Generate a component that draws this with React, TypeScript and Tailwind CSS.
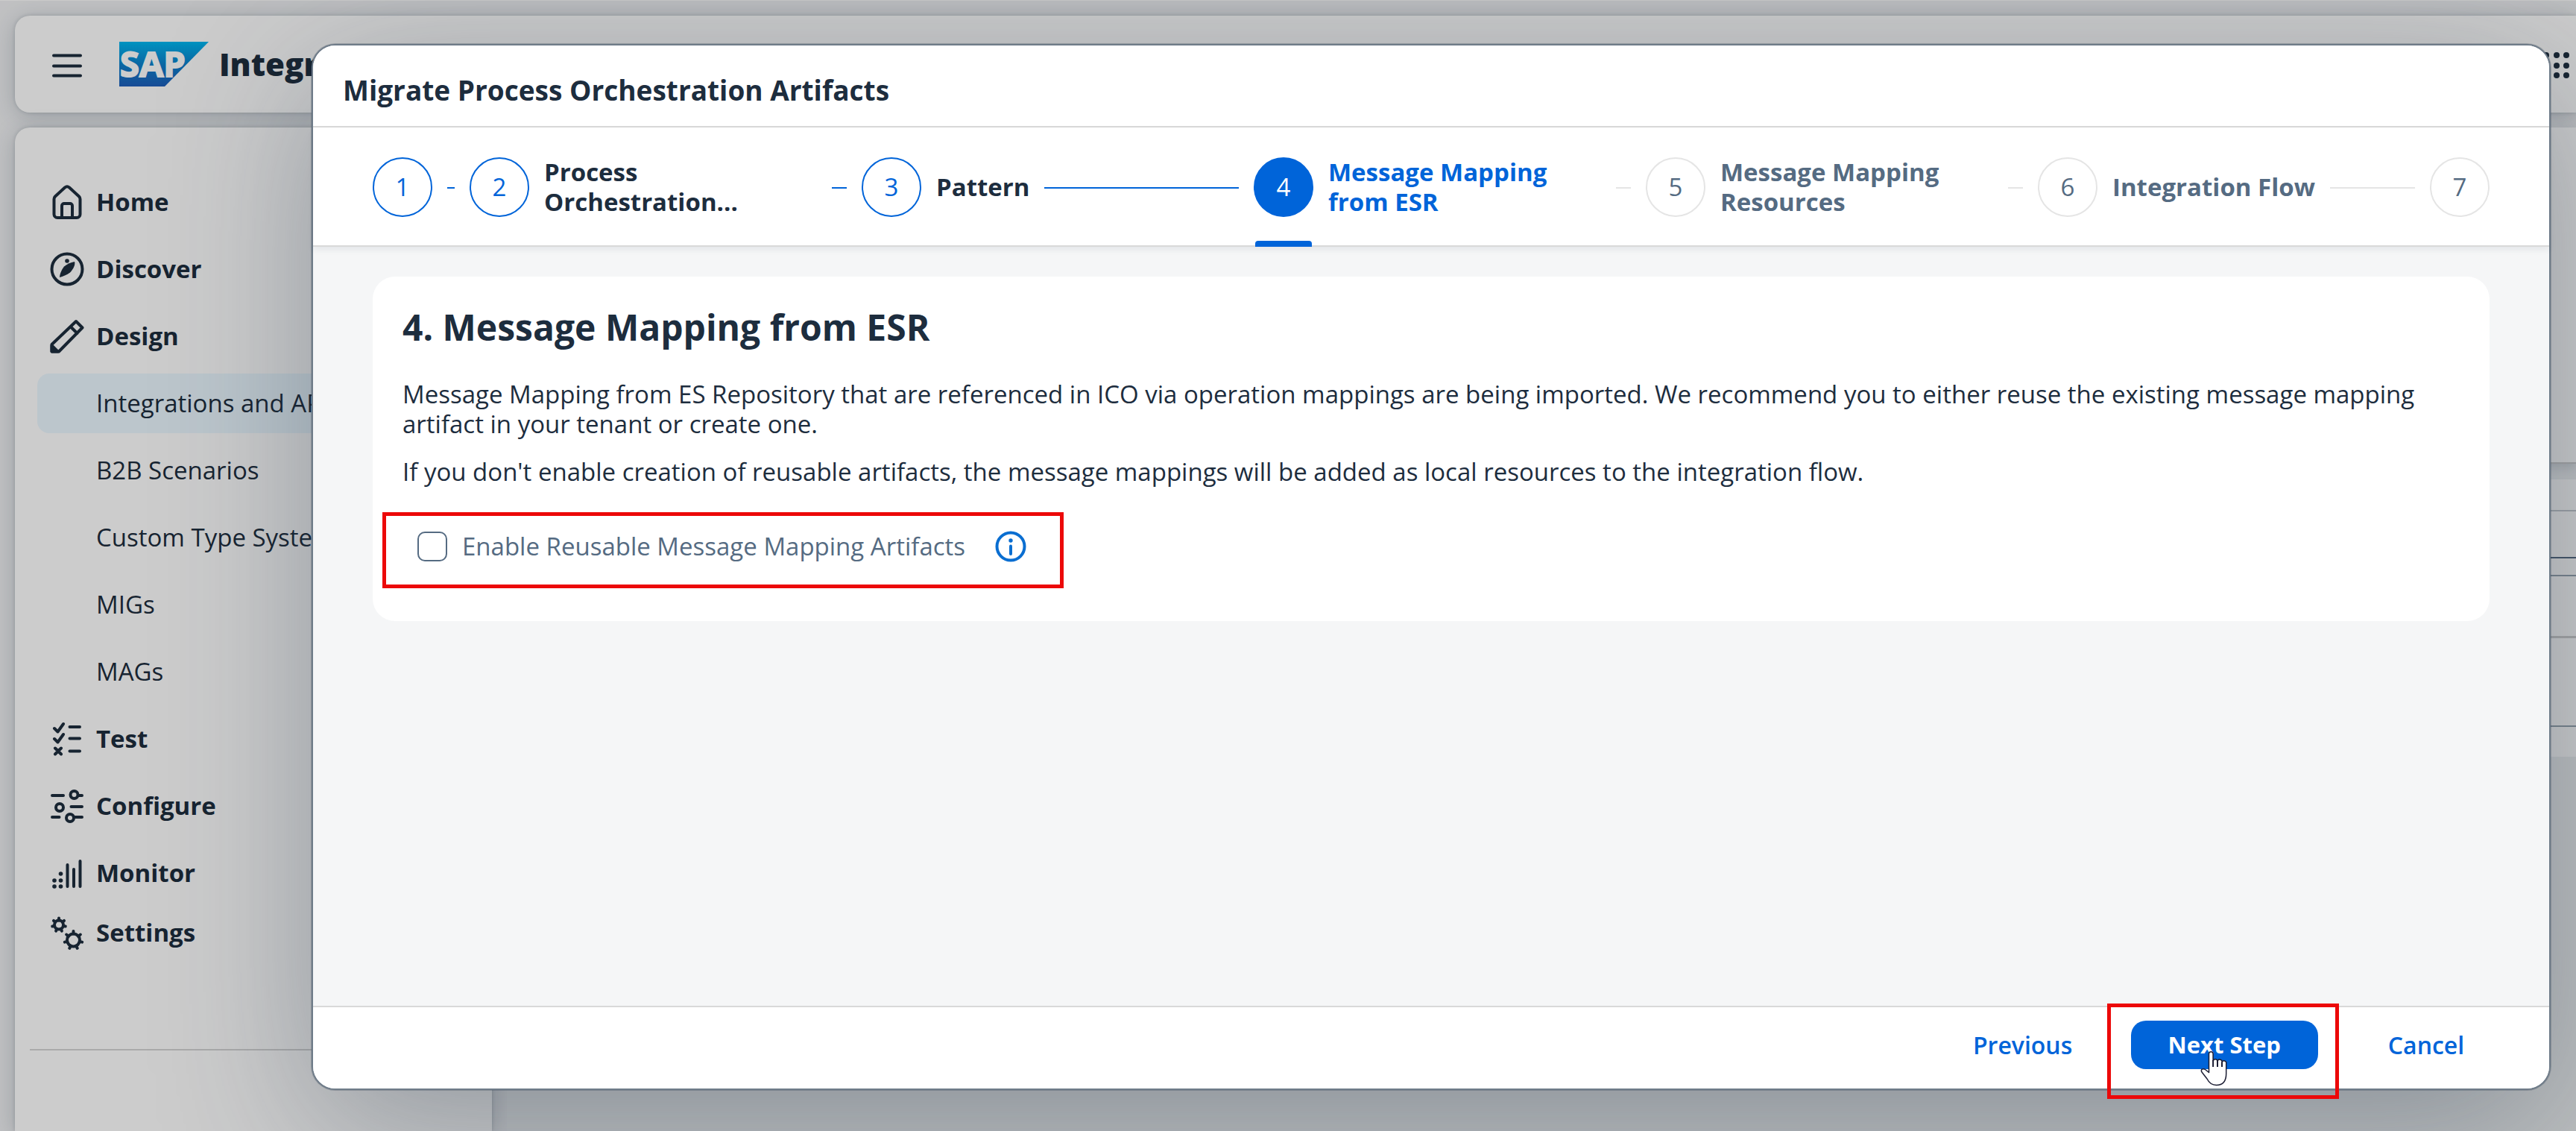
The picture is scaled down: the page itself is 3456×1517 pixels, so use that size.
import React from "react";

const Stroke = ({ children }: { children: React.ReactNode }) => (
  <svg viewBox="0 0 46 46" className="size-[46px] shrink-0" fill="none" stroke="currentColor" strokeWidth="4" strokeLinecap="round" strokeLinejoin="round" aria-hidden="true">
    {children}
  </svg>
);

const HomeIcon = () => (
  <Stroke>
    <path d="M5.5 19v20.5a4.5 4.5 0 0 0 4.500 4.500h26a4.500 4.500 0 0 0 4.500-4.500V19q0-2-1.500-3.500L26 3.500q-3-2.500-6 0L7 15.500Q5.500 17 5.500 19Z" />
    <path d="M16 44V28a3 3 0 0 1 3-3h8a3 3 0 0 1 3 3v16" />
  </Stroke>
);

const CompassIcon = () => (
  <Stroke>
    <circle cx="23" cy="23" r="20.500" />
    <path d="M33 13c1.500 4-2 10.500-6 14.500-4 3-10 5.500-14 6.500 0-4 2.500-10 6-14.500 4-3.500 9-5.500 14-6.500Z" fill="currentColor" stroke="none" />
    <circle cx="23" cy="12" r="2.800" fill="currentColor" stroke="none" />
  </Stroke>
);

const PencilIcon = () => (
  <Stroke>
    <path d="M35 3l8.500 8.500L12 43.500H2.500V34ZM28 10.500l8.500 8.500" />
    <path d="M2.500 35.500l8 8h-8Z" fill="currentColor" />
  </Stroke>
);

const ChecklistIcon = () => (
  <Stroke>
    <path d="M6 9l4.500 4.500L18 3M6 23l4.500 4.500L18 17M7 35.500l8 8M15 35.500l-8 8M26.500 7H40M26.500 22.500H40M26.500 39.500H40" />
  </Stroke>
);

const SlidersIcon = () => (
  <Stroke>
    <path d="M3 9h15M38 9h5M28.500 24H43M3 38h9.500M32.500 38H43" />
    <circle cx="32.500" cy="8" r="5" />
    <circle cx="13" cy="25" r="5" />
    <circle cx="27" cy="39" r="5" />
  </Stroke>
);

const BarsIcon = () => (
  <Stroke>
    <path d="M23.500 12v29M32 18v23M40.500 7v34" />
    <g fill="currentColor" stroke="none">
      <circle cx="6" cy="33" r="2.800" />
      <circle cx="6" cy="41" r="2.800" />
      <circle cx="14.500" cy="24" r="2.800" />
      <circle cx="14.500" cy="33" r="2.800" />
      <circle cx="14.500" cy="41" r="2.800" />
    </g>
  </Stroke>
);

const Gear = ({ cx, cy, r, tooth }: { cx: number; cy: number; r: number; tooth: number }) => (
  <g>
    <circle cx={cx} cy={cy} r={r} />
    {[0, 1, 2, 3, 4, 5, 6].map((i) => {
      const a = (i / 7) * Math.PI * 2;
      return (
        <line key={i} x1={cx + Math.sin(a) * r} y1={cy - Math.cos(a) * r} x2={cx + Math.sin(a) * tooth} y2={cy - Math.cos(a) * tooth} />
      );
    })}
  </g>
);

const GearsIcon = () => (
  <Stroke>
    <Gear cx={12} cy={12.5} r={6} tooth={9} />
    <Gear cx={31.5} cy={33} r={8.5} tooth={12} />
  </Stroke>
);

const SapLogo = () => (
  <svg viewBox="0 0 120 60" className="h-[60px] w-[120px] shrink-0" role="img" aria-label="SAP">
    <defs>
      <linearGradient id="sapBlue" x1="0" y1="0" x2="0" y2="1">
        <stop offset="0" stopColor="#00b8f1" />
        <stop offset="0.500" stopColor="#0d82cd" />
        <stop offset="1" stopColor="#1e5fbb" />
      </linearGradient>
    </defs>
    <path d="M0 0h120L61 60H0Z" fill="url(#sapBlue)" />
    <text x="1" y="47" fill="#fff" stroke="#fff" strokeWidth="2" fontFamily="'Open Sans', sans-serif" fontWeight="700" fontSize="47">
      SAP
    </text>
  </svg>
);

const MenuIcon = () => (
  <svg viewBox="0 0 40 32" className="h-8 w-10" stroke="currentColor" strokeWidth="4" strokeLinecap="round" aria-hidden="true">
    <path d="M2 2.500h36M2 16.500h36M2 29.500h36" />
  </svg>
);

const GridIcon = () => (
  <svg viewBox="0 0 36 36" className="size-9" fill="currentColor" aria-hidden="true">
    {[4, 18, 31].map((y) => [4, 18, 31].map((x) => <circle key={`${x}-${y}`} cx={x} cy={y} r="4" />))}
  </svg>
);

const InfoIcon = () => (
  <svg viewBox="0 0 42 42" className="size-[42px]" fill="none" stroke="currentColor" strokeWidth="4" strokeLinecap="round" aria-hidden="true">
    <circle cx="21" cy="21" r="18.500" />
    <path d="M21 20.500v10.500" />
    <circle cx="21" cy="13" r="2.700" fill="currentColor" stroke="none" />
  </svg>
);

const HandCursor = () => (
  <svg viewBox="0 0 36 48" className="pointer-events-none absolute top-[41px] left-[93px] h-12 w-9" fill="#fff" stroke="#1b1d33" strokeWidth="1.500" strokeLinejoin="round" aria-hidden="true">
    <path d="M11.500 29.500V4.500a2.800 2.800 0 0 1 5.600 0V14a3 3 0 0 1 5.900 .500 3 3 0 0 1 6 1.500 2.800 2.800 0 0 1 5.700 1.500V31c0 10-4.700 15.500-13.200 15.500C14 46.500 11 42 9 38L2 29c-2-3.500 1.500-5.500 4.500-3.500Z" />
    <path d="M17.100 13v9M23 14v8M29 15.500V22" strokeWidth="2" />
  </svg>
);

const navItems = [
  { label: "Home", icon: HomeIcon },
  { label: "Discover", icon: CompassIcon },
  { label: "Design", icon: PencilIcon },
  { label: "Integrations and APIs", selected: true },
  { label: "B2B Scenarios" },
  { label: "Custom Type Systems" },
  { label: "MIGs" },
  { label: "MAGs" },
  { label: "Test", icon: ChecklistIcon },
  { label: "Configure", icon: SlidersIcon },
  { label: "Monitor", icon: BarsIcon },
];

const NavLink = ({ label, icon: Icon, selected }: { label: string; icon?: React.ComponentType; selected?: boolean }) => (
  <a
    href="#"
    aria-current={selected ? "page" : undefined}
    className={`flex h-20 items-center gap-4 rounded-2xl pl-[17px] text-[33px] whitespace-nowrap ${selected ? "bg-[#ebf8ff]" : ""} ${Icon ? "font-bold" : ""}`}
  >
    <span className="w-[46px] shrink-0">{Icon && <Icon />}</span>
    {label}
  </a>
);

const Shell = () => (
  <div className="flex min-h-screen flex-col gap-5 border-t border-white bg-[#f0f1f3] pt-5 pl-5">
    <header className="flex h-[130px] items-center rounded-l-[20px] bg-white pl-[50px] shadow-[0_0_5px_rgba(34,53,72,0.2),0_5px_30px_rgba(34,53,72,0.22)]">
      <button type="button" aria-label="Menu" className="mt-1">
        <MenuIcon />
      </button>
      <div className="ml-[50px]">
        <SapLogo />
      </div>
      <span className="ml-[14px] text-[42px] leading-[54px] font-extrabold whitespace-nowrap">Integration Suite</span>
      <button type="button" aria-label="Products" className="mt-1 mr-2 ml-auto">
        <GridIcon />
      </button>
    </header>
    <div className="flex grow gap-5">
      <aside className="w-[640px] shrink-0 rounded-tl-[20px] bg-white px-5 shadow-[0_0_5px_rgba(34,53,72,0.2),0_5px_30px_rgba(34,53,72,0.22)]">
        <nav className="flex flex-col gap-2.5 px-2.5 pt-[60px]">
          {navItems.map((item) => (
            <NavLink key={item.label} {...item} />
          ))}
        </nav>
        <div className="border-b-2 border-[#d5d5d5] px-2.5 pb-[116px]">
          <NavLink label="Settings" icon={GearsIcon} />
        </div>
      </aside>
      <main className="grow bg-[#eef0f2]">
        <div className="h-[451px] border-b-2 border-[#cccccc] bg-white shadow-[0_5px_12px_rgba(34,53,72,0.15)]" />
        <div className="mt-[21px] bg-white">
          <div className="h-[43px] border-b-2 border-[#c6cbd0]" />
          <div className="h-[63px] border-b-2 border-[#556b82]" />
          <div className="h-6 border-b-2 border-[#98a5b1]" />
          <div className="h-[83px] border-b-3 border-[#d0d0d0]" />
          <div className="h-[119px] border-b-2 border-[#98a5b1]" />
          <div className="h-10" />
        </div>
      </main>
    </div>
  </div>
);

type StepState = "done" | "active" | "todo";
const steps: { n: number; label?: string; state: StepState }[] = [
  { n: 1, state: "done" },
  { n: 2, label: "Process Orchestration...", state: "done" },
  { n: 3, label: "Pattern", state: "done" },
  { n: 4, label: "Message Mapping from ESR", state: "active" },
  { n: 5, label: "Message Mapping Resources", state: "todo" },
  { n: 6, label: "Integration Flow", state: "todo" },
  { n: 7, state: "todo" },
];

const circleStyle: Record<StepState, string> = {
  done: "border-[#0064d9] text-[#0064d9]",
  active: "border-[#0064d9] bg-[#0064d9] text-white",
  todo: "border-[#e5e5e5] text-[#556b82]",
};
const labelStyle: Record<StepState, string> = {
  done: "text-[#1d2d3e]",
  active: "text-[#0064d9]",
  todo: "text-[#556b82]",
};

const Stepper = () => (
  <ol className="relative flex border-b-2 border-[#d9d9d9] bg-white px-20 pt-10 pb-[38px] shadow-[0_4px_8px_rgba(34,53,72,0.08)]">
    {steps.map(({ n, label, state }) => (
      <li key={n} className={`flex items-center ${label ? "min-w-0 flex-1" : ""}`}>
        <button type="button" aria-current={state === "active" ? "step" : undefined} className="flex min-w-0 items-center gap-5 text-left">
          <span className={`relative flex size-20 shrink-0 items-center justify-center rounded-full border-2 text-[33px] leading-10 ${circleStyle[state]}`}>
            {n}
            {state === "active" && <span className="absolute top-[110px] left-0 h-2 w-[76px] rounded-t bg-[#0064d9]" />}
          </span>
          {label && <span className={`text-[33px] leading-10 font-bold ${labelStyle[state]}`}>{label}</span>}
        </button>
        {n < 7 && (
          <span className={`mx-5 mt-0.5 h-0.5 ${label ? "min-w-5 flex-1" : "w-2.5"} ${state === "done" ? "bg-[#0064d9]" : "bg-[#e5e5e5]"}`} />
        )}
      </li>
    ))}
  </ol>
);

const Highlight = ({ className }: { className: string }) => (
  <span aria-hidden="true" className={`pointer-events-none absolute border-5 border-[#ec0808] ${className}`} />
);

const Dialog = () => (
  <section
    role="dialog"
    aria-modal="true"
    aria-labelledby="dialog-title"
    className="flex grow flex-col rounded-[32px] border-2 border-[#6f7c89] bg-[#f5f6f7] shadow-[0_0_0_1px_rgba(34,53,72,0.25),0_50px_200px_rgba(34,53,72,0.34)]"
  >
    <h1 id="dialog-title" className="rounded-t-[30px] border-b-2 border-[#d9d9d9] bg-white px-10 pt-[34px] pb-[22px] text-[37px] leading-[52px] font-bold">
      Migrate Process Orchestration Artifacts
    </h1>
    <Stepper />
    <div className="grow px-20 pt-10">
      <div className="rounded-[30px] bg-white px-10 pt-[38px] pb-[60px]">
        <h2 className="text-[48px] leading-[60px] font-bold">4. Message Mapping from ESR</h2>
        <div className="mt-10 flex flex-col gap-6 text-[33px] leading-10">
          <p>
            Message Mapping from ES Repository that are referenced in ICO via operation mappings are being imported. We recommend you to either reuse the existing message mapping artifact in your tenant or create one.
          </p>
          <p>If you don't enable creation of reusable artifacts, the message mappings will be added as local resources to the integration flow.</p>
        </div>
        <div className="relative mt-10 flex h-20 w-fit items-center pl-5 text-[33px]">
          <input id="reusable" type="checkbox" className="size-10 appearance-none rounded-[10px] border-2 border-[#556b82] bg-white checked:bg-[#0064d9]" />
          <label htmlFor="reusable" className="pl-5 text-[#556b82]">
            Enable Reusable Message Mapping Artifacts
          </label>
          <button type="button" aria-label="More information" className="ml-10 text-[#0a6ed1]">
            <InfoIcon />
          </button>
          <Highlight className="-top-1.5 -right-[50px] -bottom-4 -left-[27px]" />
        </div>
      </div>
    </div>
    <footer className="flex justify-end gap-[30px] rounded-b-[30px] border-t-2 border-[#d9d9d9] bg-white pt-[17px] pr-[50px] pb-[26px] text-[32px] leading-[65px] font-semibold text-[#0064d9]">
      <button type="button" className="min-w-[230px]">Previous</button>
      <div className="relative">
        <button type="button" className="rounded-[20px] bg-[#0064d9] px-[50px] text-[31px] font-bold text-white">Next Step</button>
        <Highlight className="-top-[22px] -right-7 -bottom-10 -left-8" />
        <HandCursor />
      </div>
      <button type="button" className="min-w-[230px]">Cancel</button>
    </footer>
  </section>
);

export default function App() {
  return (
    <div className="relative overflow-hidden font-['Open_Sans',sans-serif] text-[#1d2d3e]">
      <Shell />
      <div className="absolute inset-0 flex bg-black/20 pt-[59px] pr-[34px] pb-[55px] pl-[418px]">
        <Dialog />
      </div>
    </div>
  );
}
